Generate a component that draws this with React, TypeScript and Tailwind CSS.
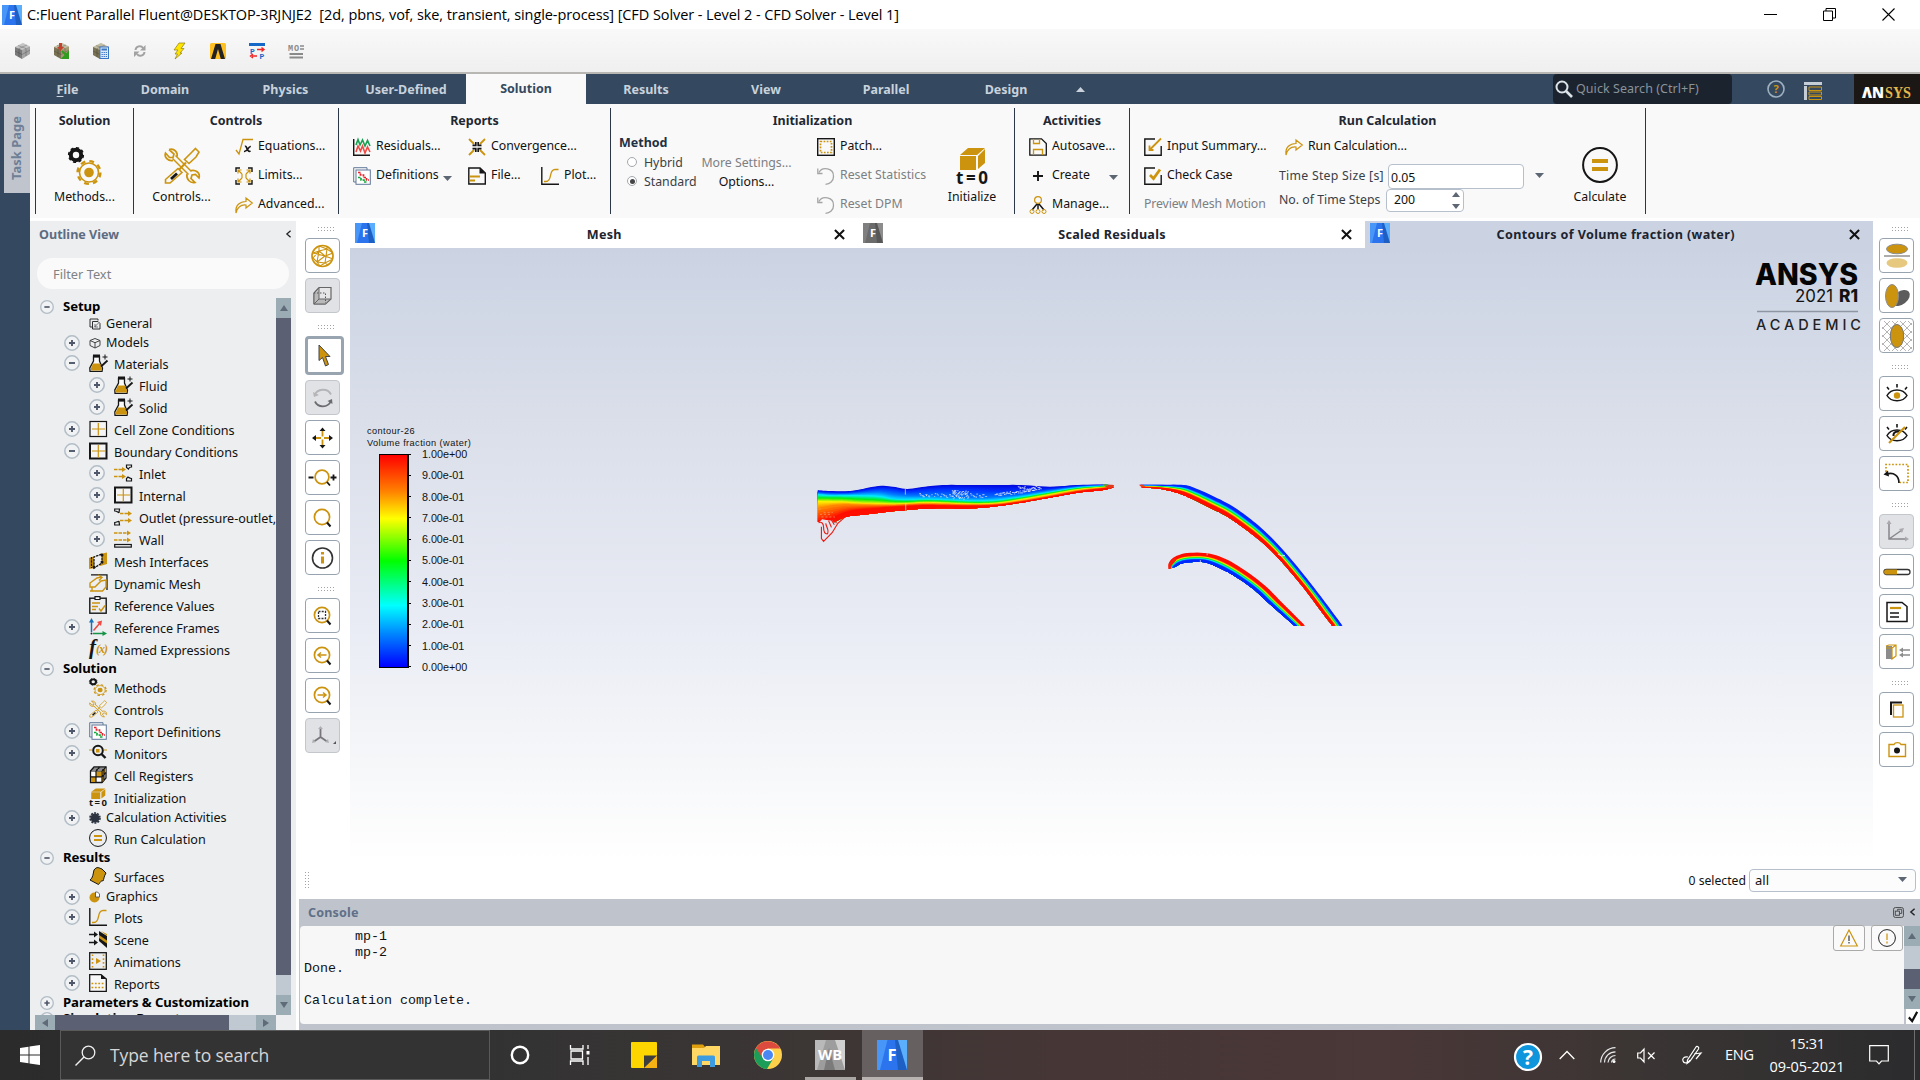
import React from "react";

const GOLD = "#cc930f";
const INK = "#161616";

type IconProps = { className?: string };

function Svg({ box = "0 0 18 18", className = "size-[18px]", children }: { box?: string; className?: string; children: React.ReactNode }) {
  return (
    <svg viewBox={box} className={`shrink-0 overflow-visible ${className}`} fill="none" preserveAspectRatio="none">
      {children}
    </svg>
  );
}

/* ---------- shared icons ---------- */

const FluentLogo = ({ className = "size-5", grey = false }: { className?: string; grey?: boolean }) => (
  <Svg box="0 0 20 20" className={className}>
    <rect width="20" height="20" fill={grey ? "#6b6b6b" : "#2b74ee"} />
    <path d="M0 0H7L2 20H0Z" fill={grey ? "#7f7f7f" : "#4896f8"} />
    <path d="M13 0H20V20H19Z" fill={grey ? "#8d8d8d" : "#5aaefb"} />
    <path d="M12 0H14L20 20H14Z" fill={grey ? "#575757" : "#1e5fc4"} />
    <text x="10" y="14" textAnchor="middle" fontSize="11" fontWeight="700" fill="#fff" fontFamily="Open Sans">F</text>
  </Svg>
);

const Gears = ({ className }: IconProps) => (
  <Svg box="0 0 34 38" className={className}>
    <circle cx="8" cy="8" r="5.2" stroke={INK} strokeWidth="4" />
    <circle cx="8" cy="8" r="7.3" stroke={INK} strokeWidth="1.6" strokeDasharray="3 2.7" />
    <circle cx="21" cy="25.5" r="9.5" stroke={GOLD} strokeWidth="1.6" />
    <circle cx="21" cy="25.5" r="11.4" stroke={GOLD} strokeWidth="2.4" strokeDasharray="4.8 4.15" />
    <circle cx="21" cy="25.5" r="4.8" fill={GOLD} />
  </Svg>
);

const Tools = ({ className }: IconProps) => (
  <Svg box="0 0 36 38" className={className}>
    <path d="M10 10L26 26" stroke={GOLD} strokeWidth="5.600" />
    <path d="M9 9L27 27" stroke="#f6f7f7" strokeWidth="2.600" />
    <path d="M5 2.500L10 7L9 10.500L5.500 10.500L1.500 6C0 10 4 14.500 9 13.500M13 9.500C14 6 11 1 5 2.500M23 27C22 32 26 36.500 31 35.500L27 31.500L28 28L31.500 27.500L35 31C36.500 26 32 22.500 27 23.500" stroke={GOLD} strokeWidth="1.700" />
    <path d="M31.500 1.500L35 5L32 10L25 16.500L20.500 12.500L27 6Z" fill="#f6f7f7" stroke={GOLD} strokeWidth="1.600" />
    <path d="M22 15.500L8 30" stroke={GOLD} strokeWidth="2" />
    <path d="M14 21.500L18 25.500L6 36H1.500V32.500Z" fill="#f6f7f7" stroke={GOLD} strokeWidth="1.600" />
    <path d="M13 26.500L7 32" stroke={INK} strokeWidth="2.800" />
  </Svg>
);

const SqrtX = () => (
  <Svg>
    <path d="M1 12L4 16L8 1.5H18" stroke={GOLD} strokeWidth="1.3" />
    <path d="M10 8.5C12 7 12 15 15.5 13M15.8 8.5C13 8 13 14 9 13.5" stroke={INK} strokeWidth="1.7" />
  </Svg>
);

const Limits = () => (
  <Svg>
    <path d="M1 5V1H5M13 1H17V5M17 13V17H13M5 17H1V13" stroke={INK} strokeWidth="1.4" />
    <path d="M3 3L7 7M15 3L11 7M3 15L7 11M15 15L11 11M7 7V11M11 7V11M3 6.500V3H6.500M11.500 3H15V6.500M15 11.500V15H11.500M6.500 15H3V11.500" stroke={GOLD} strokeWidth="1.2" />
  </Svg>
);

const CurvedArrow = () => (
  <Svg>
    <path d="M1 17C0 9 5 5.500 11 5.500V2L17.300 7L11 12V9C6 8.500 2.500 11 1 17Z" stroke={GOLD} strokeWidth="1.2" />
  </Svg>
);

const Residuals = () => (
  <Svg>
    <path d="M.7 1V17.300H17" stroke={INK} strokeWidth="1.4" />
    <path d="M3 7L5 1.500L7 7L9.500 2L12 8L14.500 2.500L17 8" stroke="#1aa053" strokeWidth="1.600" />
    <path d="M3 14L5 8L7.500 13L9.500 8L12 15L14.500 9L17 14" stroke="#ef4a43" strokeWidth="1.600" />
  </Svg>
);

const ReportDef = () => (
  <Svg>
    <path d="M.7 15V.7H14V3M.7 15H3" stroke="#61789a" strokeWidth="1" />
    <rect x="3" y="3" width="14.300" height="14.300" fill="#fff" stroke="#61789a" />
    <path d="M5 5.500H7.500V8H10.500V10.500H13.500V13H16" stroke="#e8212b" strokeWidth="1.700" strokeDasharray="2.500 1" />
    <path d="M5 10.500H8V13H11V15H14" stroke="#14a83b" strokeWidth="1.700" strokeDasharray="2.500 1" />
  </Svg>
);

const Converge = () => (
  <Svg>
    <path d="M1 1L6 6M17 1L12 6M1 17L6 12M17 17L12 12" stroke={GOLD} strokeWidth="1.800" />
    <path d="M4.500 7.300H7.800V4M13.500 7.300H10.200V4M4.500 10.700H7.800V14M13.500 10.700H10.200V14" stroke={INK} strokeWidth="1.700" />
  </Svg>
);

const FilePage = () => (
  <Svg>
    <path d="M.8 1H12L17.300 6V17H.8Z" stroke={INK} strokeWidth="1.400" />
    <path d="M11.500 1L17.300 6.500H11.500Z" fill={INK} />
    <path d="M2 9.500H12M2 13.500H7" stroke={GOLD} strokeWidth="2" />
  </Svg>
);

const PlotCurve = () => (
  <Svg>
    <path d="M.8 0V17.300H18" stroke={INK} strokeWidth="1.400" />
    <path d="M3 14.500H5C12 14.500 7 2.500 14 2.500H17.500" stroke={GOLD} strokeWidth="1.400" />
  </Svg>
);

const Patch = () => (
  <Svg>
    <rect x=".7" y=".7" width="16.600" height="16.600" stroke={INK} strokeWidth="1.400" />
    <rect x="3.500" y="3.500" width="11" height="11" stroke={GOLD} strokeWidth="1.700" strokeDasharray="1.700 1.400" />
  </Svg>
);

const ResetIcon = () => (
  <Svg>
    <path d="M2 5.500C5 -1 17 1 16.500 9.500C16.500 14 13 17.300 8.500 17.300" stroke="#a5a5a5" strokeWidth="1.300" />
    <path d="M.8 1.500V6.500H5.500" stroke="#a5a5a5" strokeWidth="1.300" />
  </Svg>
);

const CubeT0 = ({ className }: IconProps) => (
  <Svg box="0 0 32 38" className={className}>
    <path d="M4 8L12 1H29L21 8ZM4 9H20V23H4ZM22 9L29 2V16L22 22Z" fill={GOLD} />
    <text x="0" y="37" fontSize="17" fontWeight="700" fontFamily="Noto Sans" fill={INK} textLength="32">t=0</text>
  </Svg>
);

const Floppy = () => (
  <Svg>
    <path d="M.8 .8H12.500L17.300 5.500V17.200H.8Z" stroke={INK} strokeWidth="1.300" />
    <path d="M4.500 1V5.500H10.500V1M4.500 17V11.500H13.500V17" stroke={GOLD} strokeWidth="1.300" />
  </Svg>
);

const PlusMark = () => (
  <Svg>
    <path d="M9 4V14M4 9H14" stroke={INK} strokeWidth="1.900" />
  </Svg>
);

const Manage = () => (
  <Svg>
    <circle cx="9" cy="4" r="3.400" stroke={GOLD} strokeWidth="1.200" />
    <path d="M9 8V13M8 8L3 14M10 8L15 14" stroke={INK} strokeWidth="1.500" />
    <circle cx="3" cy="15.500" r="2" stroke={GOLD} />
    <circle cx="9" cy="15.500" r="2" stroke={GOLD} />
    <circle cx="15" cy="15.500" r="2" stroke={GOLD} />
  </Svg>
);

const CheckSheet = ({ big = false }: { big?: boolean }) => (
  <Svg>
    <path d="M11 1H.8V17.200H17.200V8" stroke={INK} strokeWidth="1.400" />
    {big ? <path d="M5.500 7.500V12H9.500M6 11.500L17 .5" stroke={GOLD} strokeWidth="1.800" /> : <path d="M6 8L9.500 11.500L16 2.500" stroke={GOLD} strokeWidth="2.800" />}
  </Svg>
);

const EqualsCircle = ({ className }: IconProps) => (
  <Svg box="0 0 36 36" className={className}>
    <circle cx="18" cy="18" r="16.900" stroke={INK} strokeWidth="2" />
    <path d="M10 14H26M10 22H26" stroke={GOLD} strokeWidth="4" />
  </Svg>
);

/* ---------- outline tree icons ---------- */

const General = () => (
  <Svg box="0 0 12 12" className="size-3">
    <path d="M9 2.500V1H1V9H3" stroke="#333" />
    <path d="M3.500 3.500H9L11 5.500V11H3.500Z" stroke="#333" />
    <path d="M5 9.500L9.500 5M6 6V9H9" stroke="#555" strokeWidth=".8" />
  </Svg>
);
const Models = () => (
  <Svg box="0 0 12 12" className="size-3">
    <path d="M6 1.500L11 3.500V8.500L6 11L1 8.500V3.500ZM1 3.500L6 5.700L11 3.500M6 5.700V11" stroke="#444" />
  </Svg>
);
const Flask = () => (
  <Svg box="0 0 19 18" className="h-[18px] w-[19px]">
    <path d="M4.500 2.500H10.500V7L13.500 14L13 17.300H1L.8 14L4.500 7Z" fill="#fafafa" stroke={INK} strokeWidth="1.300" />
    <path d="M4 .5H11V3.500H4Z" fill={INK} />
    <path d="M4 9.500H11L13 14V16.500H2V14Z" fill={GOLD} />
    <path d="M12 12.500L18.500 6.500" stroke={INK} strokeWidth="1.800" />
    <path d="M16 .5V5.500M13.500 3H18.500" stroke={INK} />
  </Svg>
);
const Zone = ({ bold = false }: { bold?: boolean }) => (
  <Svg>
    <rect x="1" y="1.500" width="16.500" height="15" stroke={INK} strokeWidth={bold ? 2 : 1.200} fill="#f5f5f5" />
    <path d="M9.300 3V15.500M3 9H16" stroke={GOLD} strokeWidth="1.200" />
  </Svg>
);
const Inlet = () => (
  <Svg>
    <path d="M0 5.500H9M0 12.500H9" stroke={GOLD} strokeWidth="1.300" strokeDasharray="3.500 1" />
    <path d="M8 3L12 5.500L8 8ZM8 10L12 12.500L8 15Z" fill={GOLD} />
    <path d="M12.500 1H17.500V3C15 3 15 4 14.500 5L12.500 3.500ZM12.500 17H17.500V14.500C15 14.500 15 13.500 14 13L12.500 14.500Z" stroke={INK} strokeWidth="1.200" />
  </Svg>
);
const Outlet = () => (
  <Svg>
    <path d="M6 5.500H14M6 12.500H14" stroke={GOLD} strokeWidth="1.300" strokeDasharray="3.500 1" />
    <path d="M14 3L18 5.500L14 8ZM14 10L18 12.500L14 15Z" fill={GOLD} />
    <path d="M.7 1H5.500L5 4.500C4 5 3.500 3 .7 3ZM.7 17H5.500L5 13.500C4 13 3 14.500 .7 14.500Z" stroke={INK} strokeWidth="1.200" />
  </Svg>
);
const Wall = () => (
  <Svg>
    <path d="M0 3H14M0 10H14" stroke={GOLD} strokeWidth="1.300" strokeDasharray="3.500 1" />
    <path d="M13 .5L17 3L13 5.500ZM13 7.500L17 10L13 12.500Z" fill={GOLD} />
    <rect x=".7" y="14.500" width="16.600" height="2.600" stroke={INK} strokeWidth="1.200" />
  </Svg>
);
const MeshInterfaces = () => (
  <Svg>
    <path d="M0 6L6 4V16L0 17ZM11 2L18 .5V12L11 14Z" fill={GOLD} />
    <path d="M5 16V5L13 2V11Z" fill="#eceef0" />
    <path d="M2.500 5V16M5 16V5L13 2V11Z" stroke={INK} strokeWidth="1.300" strokeDasharray="2.500 .8" />
    <circle cx="5" cy="15" r="1.500" fill={INK} /><circle cx="13" cy="3" r="1.500" fill={INK} /><circle cx="13" cy="10" r="1.500" fill={INK} />
  </Svg>
);
const DynamicMesh = () => (
  <Svg>
    <path d="M2 .8H18V16" stroke={INK} strokeWidth="1.300" />
    <path d="M1 17H13.500L17 13V6L12 7L6 13H1V9L8 4L12 3M9 1L13 3.500L10 6.500M3 17V13" stroke={GOLD} strokeWidth="1.400" />
  </Svg>
);
const RefValues = () => (
  <Svg>
    <rect x=".8" y="2.200" width="16.400" height="15" stroke={INK} strokeWidth="1.400" />
    <path d="M6 .7H11V3.500H6Z" fill="#fff" stroke={INK} strokeWidth="1.200" />
    <path d="M3 7H11M3 10.500H9M3 13.500H7M10 12.500L12 15L16 9.500" stroke={GOLD} strokeWidth="1.400" />
  </Svg>
);
const RefFrames = () => (
  <Svg>
    <path d="M2.500 14V3" stroke="#1573bd" strokeWidth="1.500" /><path d="M0 4.500L2.500 0L5 4.500Z" fill="#1573bd" />
    <path d="M4.500 12.500L11 5" stroke="#ef4a43" strokeWidth="1.500" /><path d="M8 4L13 2.500L12 8Z" fill="#ef4a43" />
    <path d="M4 15.500H14" stroke="#159346" strokeWidth="1.500" /><path d="M13.500 13L18 15.500L13.500 18Z" fill="#159346" />
    <circle cx="2.500" cy="15.500" r="1" fill="#222" />
  </Svg>
);
const Fx = () => (
  <Svg box="0 0 19 18" className="h-[18px] w-[19px]">
    <text x="0" y="14" fontFamily="Liberation Serif" fontStyle="italic" fontWeight="700" fontSize="21" fill={INK}>f</text>
    <text x="7" y="13" fontFamily="Liberation Serif" fontStyle="italic" fontWeight="700" fontSize="12" fill={GOLD} textLength="12">(x)</text>
  </Svg>
);
const Monitor = () => (
  <Svg>
    <path d="M0 6H3M15 6H18" stroke={GOLD} strokeWidth="1.200" />
    <circle cx="9" cy="6.500" r="4.800" stroke={INK} strokeWidth="2" />
    <path d="M12.500 10L16.500 14" stroke={INK} strokeWidth="2.400" />
    <rect x="7" y="5" width="3.500" height="3.500" fill={GOLD} />
  </Svg>
);
const CellRegisters = () => (
  <Svg>
    <path d="M1.500 5L5 1H17V12L13 16.500H1.500Z" fill="#fff" stroke={INK} strokeWidth="1.300" />
    <path d="M7 5.500H12.500V11H7ZM2 11H7V16H2ZM13 5L17 1V7L13 11ZM13 16V11L15 9V14Z" fill={GOLD} />
    <path d="M1.500 5H13V16.500M13 5L17 1M7 16V5L10.500 1M1.500 10.800H13L17 6.500M15 3V14M3.200 3H15" stroke={INK} strokeWidth="1.200" />
  </Svg>
);
const CalcAct = () => (
  <Svg box="0 0 12 12" className="size-3">
    <circle cx="6" cy="6" r="4.500" fill="#2b3440" /><circle cx="6" cy="6" r="5" stroke="#2b3440" strokeDasharray="2 1.140" strokeWidth="1.600" />
  </Svg>
);
const Surface = () => (
  <Svg>
    <path d="M5 3C8 -1 10 1 13 2L17 6C15 9 15 12 14 14C12 13 11 16 9.500 17.500L1 13C4 11 4 7 5 3Z" fill={GOLD} stroke={INK} />
  </Svg>
);
const Graphics = () => (
  <Svg box="0 0 12 12" className="size-3">
    <circle cx="5.500" cy="6.500" r="5" fill={GOLD} /><path d="M6.500 6V1H8.500L10.500 3V6Z" fill="#fff" stroke="#444" strokeWidth=".8" />
  </Svg>
);
const Scene = () => (
  <Svg>
    <path d="M0 4.500H6M0 12.500H6" stroke={INK} strokeWidth="1.700" /><path d="M5 1.500L9 4.500L5 7.500ZM5 9.500L9 12.500L5 15.500Z" fill={INK} />
    <path d="M10 1L18 6V18L10 11Z" fill={INK} /><path d="M10 5L18 10.500V13.500L10 8Z" fill={GOLD} /><path d="M12 1L18 4V6Z" fill={GOLD} />
  </Svg>
);
const Animation = () => (
  <Svg>
    <rect x=".7" y=".7" width="16.600" height="16.600" stroke={INK} strokeWidth="1.300" />
    <path d="M3.500 2.500V16M14.500 2.500V16" stroke={GOLD} strokeWidth="1.600" strokeDasharray="1.600 2.200" /><path d="M7 6L12 9L7 12Z" fill={GOLD} />
  </Svg>
);
const Reports = () => (
  <Svg>
    <path d="M.7 .7H12L17.300 5V17.300H.7Z" stroke={INK} strokeWidth="1.300" fill="#f7f7f7" /><path d="M12 .5V5H17.500Z" fill={INK} />
    <path d="M2.500 9.500H16M2.500 13.500H16" stroke={GOLD} strokeWidth="1.600" strokeDasharray="1.800 1.600" />
  </Svg>
);

/* ---------- title bar and quick toolbar ---------- */

function TitleBar() {
  return (
    <header className="flex h-[29px] items-center bg-white">
      <FluentLogo className="ml-[2px] size-5" />
      <span className="ml-[5px] font-['Open_Sans'] text-[14.500px] tracking-[-0.080px] whitespace-pre text-black">
        {"C:Fluent Parallel Fluent@DESKTOP-3RJNJE2  [2d, pbns, vof, ske, transient, single-process] [CFD Solver - Level 2 - CFD Solver - Level 1]"}
      </span>
      <div className="ml-auto flex items-center gap-[46px] pr-[25px]">
        <Svg box="0 0 13 13" className="size-[13px]"><path d="M0 6.500H13" stroke="#000" /></Svg>
        <Svg box="0 0 13 13" className="size-[13px]"><path d="M.5 3H9.500V12.500H.5ZM3 3V.5H12.500V10H9.500" stroke="#000" /></Svg>
        <Svg box="0 0 13 13" className="size-[13px]"><path d="M.5 .5L12.500 12.500M12.500 .5L.5 12.500" stroke="#000" strokeWidth="1.100" /></Svg>
      </div>
    </header>
  );
}

const RockCube = ({ tone = "#a39a72" }: { tone?: string }) => (
  <>
    <path d="M0 4L8 0L15 3.500V11L7 16L0 12Z" fill={tone} />
    <path d="M0 4L7 7V16L0 12Z" fill="#000" opacity=".25" />
    <path d="M0 4L8 0L15 3.500L7 7Z" fill="#fff" opacity=".35" />
    <path d="M3 2.500L11 5.500V13M12 2L4 5.500V14M0 8L7 11.500L15 7" stroke="#222" strokeWidth=".5" opacity=".5" />
  </>
);

function QuickBar() {
  return (
    <div className="flex h-[45px] items-center gap-[23px] border-b-2 border-[#b9b7b3] bg-linear-to-b from-[#f9f9f9] to-[#efefef] pl-[15px]">
      <Svg box="0 0 16 16" className="size-4"><RockCube tone="#a5a5a5" /></Svg>
      <Svg box="0 0 16 16" className="size-4"><RockCube /><path d="M5 0H8V4H10L6.500 8L3 4H5Z" fill="#c8412a" /><path d="M8 8L12 12M14 10V15H9Z" stroke="#2f9c1f" strokeWidth="2" fill="#2f9c1f" /></Svg>
      <Svg box="0 0 16 16" className="size-4"><RockCube /><rect x="7" y="4" width="8.500" height="11.500" fill="#dce9f8" stroke="#3b76c4" /><path d="M8.500 6.500H14" stroke="#3b76c4" strokeWidth="2" /><path d="M8.500 9.500H14M8.500 11.500H14M8.500 13.500H14" stroke="#3b76c4" strokeDasharray="1.300 .8" /></Svg>
      <Svg box="0 0 16 16" className="size-4"><path d="M3.500 7C4 3 9 2 11 5M12.500 9C12 13 7 14 5 11" stroke="#a2a2a2" strokeWidth="2" /><path d="M13.500 2V7.500H8ZM2 14V8.500H7.500Z" fill="#a2a2a2" /></Svg>
      <Svg box="0 0 16 16" className="size-4"><path d="M8 0H14L10 5.500H13L9 10H11L4 16L6.500 11H4L7 7H3Z" fill="#ffe500" stroke="#8f7c12" strokeWidth=".7" /></Svg>
      <Svg box="0 0 16 16" className="size-4"><rect width="16" height="16" rx="1.500" fill="#fdbf22" /><path d="M1 16L5.500 1H10.500L15 16H10.800L8 6L5.200 16Z" fill="#222" /></Svg>
      <Svg box="0 0 16 16" className="size-4"><path d="M0 1.500H16" stroke="#1668c8" strokeWidth="3" /><text x="1" y="10.500" fontSize="8" fontWeight="700" fontFamily="Liberation Mono" fill="#1668c8">P</text><text x="10.500" y="16" fontSize="8" fontWeight="700" fontFamily="Liberation Mono" fill="#1668c8">P</text><path d="M8 6.500H14M12.500 4.500L15 6.500L12.500 8.500M8 13H3M4 11L1.500 13L4 15" stroke="#f02626" strokeWidth="1.400" /></Svg>
      <Svg box="0 0 16 16" className="size-4"><text x="0" y="7.500" fontSize="8.500" fontWeight="700" fontFamily="Liberation Mono" fill="#8a8a8a" textLength="11">MO</text><path d="M12 3H16M12 6H16" stroke="#8a8a8a" strokeWidth="1.300" /><path d="M1.500 11H15M1.500 14.500H15" stroke="#8a8a8a" strokeWidth="2" /></Svg>
    </div>
  );
}

function MenuBar() {
  const tabs = ["Results", "View", "Parallel", "Design"];
  return (
    <nav className="flex h-[30px] items-center bg-[#34495f] text-[12.500px] font-bold text-[#c9d2dc]">
      <span className="ml-[30px] w-[75px] pt-[3px] text-center"><u className="underline-offset-2">F</u>ile</span>
      <span className="w-[120px] pt-[3px] text-center">Domain</span>
      <span className="w-[121px] pt-[3px] text-center">Physics</span>
      <span className="w-[120px] pt-[3px] text-center">User-Defined</span>
      <span className="h-full w-[120px] bg-[#f9f9f9] pt-[6px] text-center text-[#34495f]">Solution</span>
      {tabs.map((t) => <span key={t} className="w-[120px] pt-[3px] text-center">{t}</span>)}
      <Svg box="0 0 10 6" className="ml-[10px] h-[5px] w-[9px]"><path d="M5 0L10 6H0Z" fill="#c9d2dc" /></Svg>
      <div className="ml-auto flex h-full w-[179px] items-center gap-[3px] rounded bg-[#1b242e] pl-[2px] font-normal text-[#8a929a]">
        <Svg><circle cx="7" cy="7" r="5.500" stroke="#dbe2e8" strokeWidth="2" /><path d="M11 11L17 17" stroke="#dbe2e8" strokeWidth="2.600" /></Svg>
        <span className="pt-px text-[12.500px] tracking-[.060px]">Quick Search (Ctrl+F)</span>
      </div>
      <Svg className="ml-[35px] size-[18px]"><circle cx="9" cy="9" r="8" stroke="#9fb0c2" strokeWidth="1.600" /><text x="9" y="13" textAnchor="middle" fontSize="11" fontWeight="700" fontFamily="Noto Sans" fill={GOLD}>?</text></Svg>
      <Svg className="mt-[3px] ml-[19px] size-[18px]"><path d="M0 1.500H18" stroke="#c4cdd6" strokeWidth="3" /><path d="M1.500 4V18" stroke="#c4cdd6" strokeWidth="3" /><path d="M5 5H17.500V8.500H5ZM5 10H17.500V13H5ZM5 14.500H17.500V17.500H5Z" stroke={GOLD} /></Svg>
      <div className="ml-[32px] flex h-full w-[66px] items-center justify-center bg-[#1b1714] pt-[6px]">
        <Svg box="0 0 50 13" className="h-[13px] w-[50px]">
          <text x="0" y="12" fontFamily="Open Sans" fontWeight="800" fontSize="15" fill="#fff" textLength="22" lengthAdjust="spacingAndGlyphs">ΛN</text>
          <text x="23" y="12" fontFamily="Liberation Serif" fontSize="16" fontWeight="700" fill="#e5b94b" textLength="26" lengthAdjust="spacingAndGlyphs">SYS</text>
        </Svg>
      </div>
    </nav>
  );
}

/* ---------- ribbon ---------- */

function Group({ title, className, children }: { title: string; className: string; children: React.ReactNode }) {
  return (
    <section className={`flex h-[106px] shrink-0 flex-col border-r border-[#2c3848] ${className}`}>
      <h2 className="h-6 shrink-0 text-center text-[12.500px] leading-[25px] font-bold text-[#1f2833]">{title}</h2>
      <div className="flex h-[87px] shrink-0">{children}</div>
    </section>
  );
}

function Cmd({ icon, label, dim = false, className = "" }: { icon?: React.ReactNode; label: string; dim?: boolean; className?: string }) {
  return (
    <div className={`flex h-[29px] items-center gap-[5px] whitespace-nowrap ${dim ? "text-[#7c7f83]" : "text-[#111]"} ${className}`}>
      {icon}
      <span>{label}</span>
    </div>
  );
}

function BigCmd({ icon, label, className }: { icon: React.ReactNode; label: string; className: string }) {
  return (
    <div className={`flex shrink-0 flex-col items-center pt-[15px] ${className}`}>
      <div className="flex h-[39px] items-start">{icon}</div>
      <span className="mt-[2px] leading-[18px] whitespace-nowrap text-[#111]">{label}</span>
    </div>
  );
}

const Down = ({ className = "" }: IconProps) => (
  <Svg box="0 0 10 6" className={`h-[5px] w-[9px] ${className}`}><path d="M0 0H10L5 6Z" fill="#5d6673" /></Svg>
);

function Radio({ label, on = false }: { label: string; on?: boolean }) {
  return (
    <div className="flex h-[19px] items-center gap-[7px] pl-[8px] text-[#3a3f45]">
      <span className="-mt-[3px] flex size-[10px] items-center justify-center rounded-full border border-[#a4a8ad] bg-white">
        {on && <span className="size-[5px] rounded-full bg-[#444]" />}
      </span>
      <span>{label}</span>
    </div>
  );
}

function Ribbon() {
  return (
    <div className="flex h-[114px] bg-[#f9f9f9] pt-1 text-[12.300px]">
      <div className="-mt-1 flex w-[30px] shrink-0 justify-end bg-[#34495f]">
        <div className="flex h-[89px] w-[26px] items-center justify-center bg-[#bfc4cd]">
          <span className="-mt-px rotate-180 text-[12.800px] font-bold tracking-[.1px] text-[#6e7f96] [writing-mode:vertical-rl]">Task Page</span>
        </div>
      </div>
      <div className="h-[106px] w-[6px] border-r border-[#2c3848]" />

      <Group title="Solution" className="w-[98px]">
        <BigCmd className="w-full" icon={<Gears className="ml-[1px] h-[38px] w-[34px]" />} label="Methods..." />
      </Group>

      <Group title="Controls" className="w-[205px]">
        <BigCmd className="w-[95px]" icon={<Tools className="h-[38px] w-[36px]" />} label="Controls..." />
        <div className="ml-[6px]">
          <Cmd icon={<SqrtX />} label="Equations..." />
          <Cmd icon={<Limits />} label="Limits..." />
          <Cmd icon={<CurvedArrow />} label="Advanced..." />
        </div>
      </Group>

      <Group title="Reports" className="w-[272px]">
        <div className="ml-[14px] w-[115px]">
          <Cmd icon={<Residuals />} label="Residuals..." />
          <div className="flex items-center">
            <Cmd icon={<ReportDef />} label="Definitions" className="w-[90px]" />
            <Down className="mt-[5px]" />
          </div>
        </div>
        <div>
          <Cmd icon={<Converge />} label="Convergence..." />
          <div className="flex">
            <Cmd icon={<FilePage />} label="File..." className="w-[73px]" />
            <Cmd icon={<PlotCurve />} label="Plot..." />
          </div>
        </div>
      </Group>

      <Group title="Initialization" className="w-[404px]">
        <div className="w-[90px] pl-[8px] pt-[2px]">
          <div className="h-[20px] text-[12.500px] leading-[18px] font-bold text-[#1f3144]">Method</div>
          <Radio label="Hybrid" />
          <Radio label="Standard" on />
        </div>
        <div className="flex w-[91px] flex-col items-center pt-[21px] leading-[19px] whitespace-nowrap">
          <span className="text-[#7c7f83]">More Settings...</span>
          <span className="text-[#111]">Options...</span>
        </div>
        <div className="ml-[25px] w-[115px]">
          <Cmd icon={<Patch />} label="Patch..." />
          <Cmd icon={<ResetIcon />} label="Reset Statistics" dim />
          <Cmd icon={<ResetIcon />} label="Reset DPM" dim />
        </div>
        <BigCmd className="ml-[10px] w-[60px]" icon={<CubeT0 className="h-[38px] w-[32px]" />} label="Initialize" />
      </Group>

      <Group title="Activities" className="w-[115px]">
        <div className="ml-[14px] w-[80px]">
          <Cmd icon={<Floppy />} label="Autosave..." />
          <Cmd icon={<PlusMark />} label="Create" />
          <Cmd icon={<Manage />} label="Manage..." />
        </div>
        <Down className="mt-[43px]" />
      </Group>

      <Group title="Run Calculation" className="w-[516px]">
        <div className="ml-[14px] w-[135px]">
          <Cmd icon={<CheckSheet big />} label="Input Summary..." />
          <Cmd icon={<CheckSheet />} label="Check Case" />
          <Cmd label="Preview Mesh Motion" dim className="tracking-[-0.120px]" />
        </div>
        <div className="w-[267px] text-[#3a3f45]">
          <Cmd icon={<CurvedArrow />} label="Run Calculation..." className="pl-[6px] tracking-[-0.050px]" />
          <div className="mt-[3px] flex h-[25px] items-center">
            <span className="w-[109px] tracking-[.250px] whitespace-nowrap">Time Step Size [s]</span>
            <span className="flex h-[25px] w-[136px] items-center rounded-[4px] border border-[#b5c0cc] bg-white pt-[3px] pl-[2px] text-[#111]">0.05</span>
            <Down className="mt-[-2px] ml-[11px]" />
          </div>
          <div className="flex h-[23px] items-center">
            <span className="w-[107px] whitespace-nowrap">No. of Time Steps</span>
            <span className="flex h-[23px] w-[78px] items-center justify-between rounded-[4px] border border-[#b5c0cc] bg-white pr-[3px] pl-[7px] text-[#111]">
              200
              <span className="flex flex-col gap-[7px]">
                <Svg box="0 0 10 6" className="h-[5px] w-[8px]"><path d="M5 0L10 6H0Z" fill="#5d6673" /></Svg>
                <Svg box="0 0 10 6" className="h-[5px] w-[8px]"><path d="M0 0H10L5 6Z" fill="#5d6673" /></Svg>
              </span>
            </span>
          </div>
        </div>
        <BigCmd className="ml-[24px] w-[60px]" icon={<EqualsCircle className="size-9" />} label="Calculate" />
      </Group>
    </div>
  );
}

/* ---------- outline tree ---------- */

type Node = { label: string; depth: number; icon?: React.ReactNode; exp?: "+" | "-"; small?: boolean };

const NODES: Node[] = [
  { label: "Setup", depth: 0, exp: "-" },
  { label: "General", depth: 1, icon: <General />, small: true },
  { label: "Models", depth: 1, icon: <Models />, exp: "+", small: true },
  { label: "Materials", depth: 1, icon: <Flask />, exp: "-" },
  { label: "Fluid", depth: 2, icon: <Flask />, exp: "+" },
  { label: "Solid", depth: 2, icon: <Flask />, exp: "+" },
  { label: "Cell Zone Conditions", depth: 1, icon: <Zone />, exp: "+" },
  { label: "Boundary Conditions", depth: 1, icon: <Zone bold />, exp: "-" },
  { label: "Inlet", depth: 2, icon: <Inlet />, exp: "+" },
  { label: "Internal", depth: 2, icon: <Zone bold />, exp: "+" },
  { label: "Outlet (pressure-outlet,", depth: 2, icon: <Outlet />, exp: "+" },
  { label: "Wall", depth: 2, icon: <Wall />, exp: "+" },
  { label: "Mesh Interfaces", depth: 1, icon: <MeshInterfaces /> },
  { label: "Dynamic Mesh", depth: 1, icon: <DynamicMesh /> },
  { label: "Reference Values", depth: 1, icon: <RefValues /> },
  { label: "Reference Frames", depth: 1, icon: <RefFrames />, exp: "+" },
  { label: "Named Expressions", depth: 1, icon: <Fx /> },
  { label: "Solution", depth: 0, exp: "-" },
  { label: "Methods", depth: 1, icon: <Gears className="size-[18px]" /> },
  { label: "Controls", depth: 1, icon: <Tools className="size-[18px]" /> },
  { label: "Report Definitions", depth: 1, icon: <ReportDef />, exp: "+" },
  { label: "Monitors", depth: 1, icon: <Monitor />, exp: "+" },
  { label: "Cell Registers", depth: 1, icon: <CellRegisters /> },
  { label: "Initialization", depth: 1, icon: <CubeT0 className="size-[18px]" /> },
  { label: "Calculation Activities", depth: 1, icon: <CalcAct />, exp: "+", small: true },
  { label: "Run Calculation", depth: 1, icon: <EqualsCircle className="size-[18px]" /> },
  { label: "Results", depth: 0, exp: "-" },
  { label: "Surfaces", depth: 1, icon: <Surface /> },
  { label: "Graphics", depth: 1, icon: <Graphics />, exp: "+", small: true },
  { label: "Plots", depth: 1, icon: <PlotCurve />, exp: "+" },
  { label: "Scene", depth: 1, icon: <Scene /> },
  { label: "Animations", depth: 1, icon: <Animation />, exp: "+" },
  { label: "Reports", depth: 1, icon: <Reports />, exp: "+" },
  { label: "Parameters & Customization", depth: 0, exp: "+" },
  { label: "Simulation Reports", depth: 0, exp: "+" },
];

function Expander({ kind, root }: { kind?: "+" | "-"; root: boolean }) {
  const size = root ? "size-[14px]" : "size-4";
  if (!kind) return <span className={`shrink-0 ${size}`} />;
  return (
    <Svg box="0 0 16 16" className={size}>
      <circle cx="8" cy="8" r="7.200" stroke="#b2bdc6" strokeWidth="1.500" fill="#f1f2f4" />
      <path d={kind === "+" ? "M5 8H11M8 5V11" : "M5 8H11"} stroke="#4f586a" strokeWidth="1.900" />
    </Svg>
  );
}

function TreeRow({ n }: { n: Node }) {
  if (n.depth === 0)
    return (
      <li className="flex h-4 shrink-0 items-center gap-[9px] pl-[10px] text-[13.200px] font-bold text-black">
        <Expander kind={n.exp} root />
        <span className="tracking-[-0.100px]">{n.label}</span>
      </li>
    );
  return (
    <li className={`flex shrink-0 items-center text-[#111] ${n.small ? "h-[19px]" : "h-[22px]"} ${n.depth === 1 ? "pl-[34px]" : "pl-[59px]"}`}>
      <span className="-mt-[2px] flex"><Expander kind={n.exp} root={false} /></span>
      <span className={`-mt-[2px] ml-[9px] flex shrink-0 ${n.small ? "w-[17px]" : "w-[25px]"}`}>{n.icon}</span>
      <span className={`${n.small ? "" : "pt-[2px]"} tracking-[-0.040px]`}>{n.label}</span>
    </li>
  );
}

const Arrow = ({ dir, className }: { dir: "up" | "down" | "left" | "right"; className: string }) => {
  const d = { up: "M5 2L9 8H1Z", down: "M1 2H9L5 8Z", left: "M8 1V9L2 5Z", right: "M2 1V9L8 5Z" }[dir];
  return (
    <div className={`flex shrink-0 items-center justify-center bg-[#9bacb5] ${className}`}>
      <Svg box="0 0 10 10" className="size-[10px]"><path d={d} fill="#5f6b78" /></Svg>
    </div>
  );
};

function Outline() {
  return (
    <aside className="flex w-[266px] shrink-0 flex-col bg-[#eceef0]">
      <div className="flex h-[28px] shrink-0 items-center justify-between pr-[5px] pl-[9px]">
        <h2 className="text-[12.600px] font-bold text-[#5c6c82]">Outline View</h2>
        <Svg box="0 0 6 10" className="mt-[-3px] h-[8px] w-[5px]"><path d="M5.500 1L1 5L5.500 9" stroke="#222" strokeWidth="1.500" /></Svg>
      </div>
      <div className="mt-[9px] ml-[7px] flex h-[31px] w-[252px] shrink-0 items-center rounded-full bg-[#fafafa] pt-[2px] pl-[16px] text-[12.800px] text-[#7e8286]">Filter Text</div>
      <div className="mt-[9px] flex h-[717px] shrink-0">
        <ul className="flex w-[246px] flex-col overflow-hidden pt-[1px] text-[12.600px] whitespace-nowrap">
          {NODES.map((n) => <TreeRow key={n.label + n.depth} n={n} />)}
        </ul>
        <div className="flex w-[15px] flex-col bg-[#c0c9d1]">
          <Arrow dir="up" className="h-5 w-full" />
          <div className="h-[657px] bg-[#5b6172]" />
          <Arrow dir="down" className="mt-auto h-5 w-full" />
        </div>
      </div>
      <div className="ml-[5px] flex h-[15px] w-[241px] shrink-0 bg-[#c0c9d1]">
        <Arrow dir="left" className="h-full w-5" />
        <div className="w-[174px] bg-[#5b6172]" />
        <Arrow dir="right" className="ml-auto h-full w-5" />
      </div>
    </aside>
  );
}

/* ---------- graphics toolbars ---------- */

function Grip() {
  return (
    <div className="flex h-[18px] shrink-0 items-center">
      <div className="ml-[13px] grid grid-cols-6 gap-[2px]">
        {Array.from({ length: 12 }, (_, i) => <span key={i} className="size-px bg-[#a3a3a3]" />)}
      </div>
    </div>
  );
}

function ToolBtn({ children, off = false, sel = false }: { children: React.ReactNode; off?: boolean; sel?: boolean }) {
  const look = sel ? "size-[39px] border-[3px] border-[#98a5b1] bg-white" : off ? "size-[35px] border border-[#c3c6cb] bg-[#e1e2e6]" : "size-[35px] border border-[#97a3af] bg-white";
  return (
    <div className={`mb-[5px] flex shrink-0 items-center justify-center rounded-[4px] ${look}`}>
      <Svg box="0 0 30 30" className="size-[30px]">{children}</Svg>
    </div>
  );
}

const Lens = ({ children }: { children?: React.ReactNode }) => (
  <>
    <circle cx="14" cy="14" r="7.600" stroke={GOLD} strokeWidth="1.700" />
    <path d="M19 19.500L22.500 23.500" stroke={INK} strokeWidth="2" />
    {children}
  </>
);

function LeftTools() {
  return (
    <div className="-mt-px flex w-[54px] shrink-0 flex-col pl-[9px]">
      <Grip />
      <ToolBtn>
        <circle cx="14.500" cy="15" r="10.500" stroke={GOLD} strokeWidth="1.700" />
        <path d="M5 12L11 10L19 8L25 12M5 17L9 21L17 22L25 18M11 5L11 10L9 21M19 5L19 8L17 22M11 10L17 15L25 12M17 15L9 21M5 12L17 15L25 18M11 5L19 8M9 21L12 25L17 22L20 24M5 17L11 10" stroke={GOLD} strokeWidth="1.100" />
      </ToolBtn>
      <ToolBtn off>
        <path d="M6 12L11 6.500H23V18L17.500 23H6Z" fill="#e6e6e8" stroke="#666" strokeWidth="1.200" />
        <path d="M6 12L11 7V18L6 23ZM6 23L11 18H22.500L17.500 23Z" fill="#b9b9bb" stroke="#666" strokeWidth="1" />
        <path d="M6 12H17.500V22" stroke="#555" strokeDasharray="1.500 1.500" />
      </ToolBtn>
      <Grip />
      <ToolBtn sel><path d="M9 4L20 15.500H15.500L18.500 23.500L15.500 25L12.500 16.500L9 19.500Z" fill={GOLD} stroke="#444" strokeWidth="1" /></ToolBtn>
      <ToolBtn off>
        <path d="M6.500 12.500C9 5 20 5 23 11.500" stroke="#b5b5b8" strokeWidth="1.800" /><path d="M5 9L6 14L11 12Z" fill="#b5b5b8" />
        <path d="M23 18C20 25 10 25 7 18.500" stroke="#6c6c70" strokeWidth="1.800" /><path d="M24.500 21L24 16L19.500 18Z" fill="#6c6c70" />
      </ToolBtn>
      <ToolBtn>
        <path d="M14.500 8V22M7.500 15H21.500" stroke={GOLD} strokeWidth="1.800" /><path d="M14.500 4.500L17.500 8H11.500ZM14.500 25.500L17.500 22H11.500ZM4 15L8 12V18ZM25 15L21 12V18Z" fill={INK} />
        <rect x="13" y="13.500" width="3" height="3" fill="#fff" />
      </ToolBtn>
      <ToolBtn><circle cx="14" cy="14" r="6.900" stroke={GOLD} strokeWidth="1.700" /><path d="M19 19L22 22.500M.5 14.500H5.500M22.500 14.500H28.500M25.500 11.500V17.500" stroke={INK} strokeWidth="1.800" /></ToolBtn>
      <ToolBtn><Lens /></ToolBtn>
      <ToolBtn><circle cx="14.500" cy="15" r="10" stroke="#333" strokeWidth="1.600" /><path d="M14.500 13.500V20.500M14.500 9V11.500" stroke={GOLD} strokeWidth="3" /></ToolBtn>
      <Grip />
      <ToolBtn><Lens><rect x="10.500" y="10.500" width="7" height="7" stroke="#333" strokeWidth="1.300" strokeDasharray="2 1.200" /></Lens></ToolBtn>
      <ToolBtn><Lens><path d="M18.500 14H11M13 11.500L10 14L13 16.500" stroke={GOLD} strokeWidth="1.500" /></Lens></ToolBtn>
      <ToolBtn><Lens><path d="M9.500 14H17M15 11.500L18 14L15 16.500" stroke={GOLD} strokeWidth="1.500" /></Lens></ToolBtn>
      <ToolBtn off>
        <path d="M12.500 8V16L6 20.500M12.500 16L19 20.500" stroke="#77777b" strokeWidth="1.800" /><path d="M12.500 5L15 8H10ZM4 22L5 18L8 21ZM21 22L20 18L17 21Z" fill="#b0b0b4" />
        <path d="M28 20V23H25Z" fill="#555" />
      </ToolBtn>
    </div>
  );
}

function RightTools() {
  const hatch = Array.from({ length: 7 }, (_, i) => i * 8 - 22);
  return (
    <div className="-mt-px flex w-[47px] shrink-0 flex-col pl-[6px]">
      <Grip />
      <ToolBtn>
        <ellipse cx="15" cy="8" rx="10.500" ry="4.800" fill={GOLD} stroke="#8d8d8d" /><path d="M2 15H28" stroke="#777" strokeWidth="1.200" />
        <ellipse cx="15" cy="22" rx="10.500" ry="4.800" fill="#e6c97f" />
      </ToolBtn>
      <ToolBtn><ellipse cx="19" cy="17" rx="10" ry="6.500" transform="rotate(-38 19 17)" fill="#5c5c5c" /><ellipse cx="10" cy="15" rx="6.500" ry="11.500" fill={GOLD} stroke="#8d8d8d" /></ToolBtn>
      <ToolBtn>
        <svg width="30" height="30" viewBox="0 0 30 30" stroke="#b5b5b5">{hatch.map((k) => <path key={k} d={`M${k} 0L${k + 30} 30M${k + 30} 0L${k} 30`} />)}</svg>
        <ellipse cx="15" cy="15" rx="6.700" ry="11.500" fill={GOLD} stroke="#777" />
      </ToolBtn>
      <Grip />
      <ToolBtn>
        <path d="M5 16.500C9 9 21 9 25 16.500C21 23.500 9 23.500 5 16.500Z" stroke={INK} strokeWidth="1.500" /><circle cx="15" cy="16.500" r="3.200" fill={GOLD} />
        <path d="M15 5V8.500M5 8L7 10.500M25 8L23 10.500" stroke={INK} strokeWidth="1.600" />
      </ToolBtn>
      <ToolBtn>
        <path d="M5 16.500C9 9 21 9 25 16.500C21 23.500 9 23.500 5 16.500Z" stroke={INK} strokeWidth="1.500" /><path d="M11.500 17C11 13 15 12 17 13" stroke={INK} strokeWidth="2" />
        <path d="M15 5V8.500M5 8L7 10.500M25 8L23 10.500" stroke={INK} strokeWidth="1.600" /><path d="M7 24L23 8" stroke={GOLD} strokeWidth="2.200" />
      </ToolBtn>
      <ToolBtn><path d="M4 13V5.500H26V23.500H18" stroke={GOLD} strokeWidth="1.700" strokeDasharray="1.700 1.700" /><path d="M5 15C12 13 17 17 17 24" stroke={INK} strokeWidth="1.700" /><path d="M1.500 15.500L6 11.500L7 17.500Z" fill={INK} /></ToolBtn>
      <Grip />
      <ToolBtn off><path d="M7 6V22H24M7 22L20 13" stroke="#87878b" strokeWidth="1.500" /><path d="M7 3L9.500 7H4.500ZM27 22L23 19.500V24.500ZM22 11L17 12L20 16Z" fill="#aaaaae" /></ToolBtn>
      <ToolBtn><rect x="2" y="12.500" width="26" height="5" rx="2.500" stroke="#333" strokeWidth="1.300" /><path d="M4 12.500H15V17.500H4C1.500 17.500 1.500 12.500 4 12.500Z" fill={GOLD} /></ToolBtn>
      <ToolBtn><path d="M5 5.500H20L25 9.500V24.500H5Z" stroke={INK} strokeWidth="1.500" /><path d="M8 11H19" stroke={GOLD} strokeWidth="2.200" /><path d="M8 16H17M8 20H17" stroke={INK} strokeWidth="1.400" /></ToolBtn>
      <ToolBtn><path d="M4 9H10V22H4Z" fill="#8c8c8c" /><path d="M4 9L7 8H14V19L10 22V11L14 8M10 22V11H4" stroke={GOLD} strokeWidth="1.200" /><path d="M19 13H28M19 18H28" stroke="#8c8c8c" strokeWidth="1.400" /><path d="M17 13L21 10.500V15.500ZM17 18L21 15.500V20.500Z" fill="#8c8c8c" /></ToolBtn>
      <Grip />
      <ToolBtn><path d="M20 7.500H9V20" stroke={INK} strokeWidth="2" /><rect x="11.500" y="10" width="9.500" height="12" stroke={GOLD} strokeWidth="1.300" fill="#fff" /></ToolBtn>
      <ToolBtn><path d="M7 9.500H12C13 7 18 7 19 9.500H23.500V21.500H7Z" stroke={GOLD} strokeWidth="1.400" /><circle cx="15" cy="15.500" r="3" fill={INK} /></ToolBtn>
    </div>
  );
}

/* ---------- contour plot ---------- */

type RGB = [number, number, number];
const css = (c: RGB) => `rgb(${c.map((v) => Math.round(v)).join(",")})`;

/* Smooth polyline through control points (Catmull-Rom). */
function smooth(p: number[][], n = 6): number[][] {
  const out: number[][] = [];
  for (let i = 0; i < p.length - 1; i++) {
    const [a, b, c, d] = [p[Math.max(i - 1, 0)], p[i], p[i + 1], p[Math.min(i + 2, p.length - 1)]];
    for (let s = 0; s < n; s++) {
      const t = s / n;
      out.push([0, 1].map((k) => 0.5 * (2 * b[k] + (c[k] - a[k]) * t + (2 * a[k] - 5 * b[k] + 4 * c[k] - d[k]) * t * t + (3 * b[k] - a[k] - 3 * c[k] + d[k]) * t * t * t)));
    }
  }
  out.push(p[p.length - 1]);
  return out;
}

/* A stack of isolines, painted from the top one down; colour is blended between neighbours. */
function Bands({ lines, colors }: { lines: number[][][]; colors: RGB[] }) {
  const steps = 5;
  const curves = lines.map((l) => smooth(l));
  const last = curves.length - 1;
  const bottom = curves[last].map((p) => p.map((v) => v.toFixed(1)).join(" ")).reverse().join("L");
  const out: React.ReactNode[] = [];
  for (let k = 0; k < last; k++) {
    for (let s = 0; s < steps; s++) {
      const t = s / steps;
      const pts = curves[k].map((p, i) => p.map((v, j) => (v + (curves[k + 1][i][j] - v) * t).toFixed(1)).join(" ")).join("L");
      const c = colors[k].map((v, j) => v + (colors[k + 1][j] - v) * t) as RGB;
      out.push(<path key={`${k}-${s}`} d={`M${pts}L${bottom}Z`} fill={css(c)} />);
    }
  }
  return <>{out}</>;
}

const BLUE: RGB = [0, 40, 255];
const CYAN: RGB = [0, 235, 255];
const GREEN: RGB = [0, 240, 20];
const YELLOW: RGB = [255, 240, 0];
const ORANGE: RGB = [255, 130, 0];
const RED: RGB = [255, 15, 0];

function Jet({ a, b, reverse = false }: { a: number[][]; b: number[][]; reverse?: boolean }) {
  const f = reverse ? [0, 0.32, 0.44, 0.54, 0.64, 0.74, 1] : [0, 0.24, 0.36, 0.47, 0.58, 0.7, 1];
  const ramp = reverse ? [RED, RED, YELLOW, GREEN, CYAN, BLUE, BLUE] : [BLUE, BLUE, CYAN, GREEN, YELLOW, RED, RED];
  return <Bands lines={f.map((t) => a.map((p, i) => p.map((v, j) => v + (b[i][j] - v) * t)))} colors={ramp} />;
}

const PX = [50, 85, 125, 160, 220, 260, 300, 350, 400, 480, 550, 620, 700, 780, 850, 878];
const BODY = [
  [61, 63, 64, 60, 48, 50, 57, 50, 45, 45, 45, 45, 50, 45, 44, 46],
  [65, 68, 69, 65, 56, 58, 64, 60, 57, 58, 62, 63, 57, 48, 45, 46.400],
  [69, 72, 72, 70, 66, 72, 76, 77, 78, 83, 81, 74, 61, 50, 46, 46.800],
  [73, 76, 76, 76, 78, 86, 88, 87, 89, 92, 90, 80, 66, 52.500, 48, 47.200],
  [83, 83, 84, 86, 89, 93, 94, 92, 93, 97, 95, 84, 69, 55, 50, 48],
  [93, 94, 95, 98, 100, 101, 100, 97, 98, 101, 99, 88, 73, 58, 51, 49],
  [114, 107, 103, 104, 105, 105, 103, 101, 102, 104, 102, 92, 77, 61, 53, 50],
  [152, 142, 126, 118, 113, 110, 108, 105, 106, 107, 105, 95, 80, 64, 55, 51],
  [154, 160, 142, 136, 129, 124, 120, 116, 115, 115, 109, 98, 83, 68, 60, 52],
];
const BODY_COLORS: RGB[] = [[0, 10, 225], [0, 50, 255], [0, 125, 255], CYAN, GREEN, YELLOW, ORANGE, RED, RED];

const JET_TOP = [[953, 44], [1015, 44], [1075, 45], [1110, 56], [1160, 80], [1210, 108], [1255, 142], [1300, 182], [1350, 237], [1400, 300], [1450, 368], [1490, 425], [1519, 467]];
const JET_BOTTOM = [[958, 53], [1010, 57], [1060, 70], [1100, 88], [1145, 112], [1190, 136], [1232, 166], [1278, 203], [1320, 243], [1367, 298], [1415, 360], [1460, 425], [1490, 467]];
const LOW_TOP = [[1032, 297], [1033, 278], [1050, 260], [1085, 249], [1140, 250], [1190, 266], [1240, 297], [1300, 345], [1350, 398], [1414, 467]];
const LOW_BOTTOM = [[1046, 292], [1052, 290], [1065, 282], [1088, 277], [1132, 277], [1170, 292], [1215, 317], [1270, 358], [1315, 402], [1384, 467]];

const SPECKS = Array.from({ length: 132 }, (_, i) => {
  const a = (i * 7919) % 101;
  const b = (i * 104729) % 37;
  if (i % 3 === 0) return { x: 425 + (a % 46), y: 61 + (b % 26), w: 4 };
  if (i % 3 === 1) return { x: 330 + a * 1.9, y: 70 + (b % 12), w: 3 + (a % 4) };
  return { x: 545 + a * 1.25, y: 75 - a * 0.22 + (b % 10) - 4, w: 3 + (b % 6) };
});

function Contours() {
  return (
    <svg viewBox="0 0 1568 510" preserveAspectRatio="none" className="absolute top-[222px] left-[450px] h-[170px] w-[560px]" fill="none">
      <Bands lines={BODY.map((ys) => ys.map((y, i) => [PX[i], y]))} colors={BODY_COLORS} />
      <path d="M52 158L62 148L74 150L92 152L98 170L84 196L66 216L60 205Z" fill="#e4e7f0" />
      <path d="M52 158C60 154 66 160 66 172C66 186 70 192 76 192C84 184 74 172 72 160M60 170V206L66 214L90 188L106 160L124 143M80 152L88 172M88 150L96 164M96 148L102 160" stroke="#ee1c14" strokeWidth="3.200" />
      <path d="M52 117H60M66 127H92M56 133H88M60 141H98" stroke="#e8a06a" strokeWidth="2" strokeDasharray="6 5" />
      {SPECKS.map((s, i) => <rect key={i} x={s.x} y={s.y} width={s.w} height="2.500" fill={i % 2 ? "#e4ecfb" : "#a8c8fa"} />)}
      <path d="M610 50L640 58L665 48M625 66L660 60M615 56L632 50" stroke="#dfe6f4" strokeWidth="2.500" strokeDasharray="9 4" />
      <path d="M295 56V74M296 100V122" stroke="#e8ecf4" strokeWidth="2" />
      <path d="M848 44H875L880 48L866 57" fill="#e23b1c" /><path d="M848 45H862" stroke="#3fc23c" strokeWidth="4" />
      <Jet a={JET_TOP} b={JET_BOTTOM} />
      <path d="M949 44H962L968 52H956Z" fill="#f0401a" />
      <path d="M1338 252L1348 258L1358 256" stroke="#e6f0f0" strokeWidth="2.500" />
      <Jet a={LOW_TOP} b={LOW_BOTTOM} reverse />
      <path d="M1032 297L1033 280L1050 262L1054 270L1042 284L1038 294Z" fill="#f5200c" />
      <path d="M1121 270V279M1140 250V256" stroke="#e8ecf4" strokeWidth="2" />
    </svg>
  );
}

const TICKS = ["1.00e+00", "9.00e-01", "8.00e-01", "7.00e-01", "6.00e-01", "5.00e-01", "4.00e-01", "3.00e-01", "2.00e-01", "1.00e-01", "0.00e+00"];

function Legend() {
  return (
    <div className="absolute top-[177px] left-[17px] font-['Liberation_Sans'] text-[#111]">
      <div className="text-[9.200px] leading-[12px] tracking-[.420px]">contour-26</div>
      <div className="text-[9.200px] leading-[12px] tracking-[.420px] whitespace-nowrap">Volume fraction (water)</div>
      <div className="mt-[4px] ml-[12px] flex">
        <div className="mt-px h-[214px] w-[30px] border border-r-2 border-black bg-[linear-gradient(to_bottom,#f00_0%,#ff8000_17%,#ff0_30%,#0f0_50%,#0ff_71%,#0080ff_85%,#00f_100%)]" />
        <div className="-mt-[6px] flex h-[227px] flex-col justify-between">
          {TICKS.map((t, i) => (
            <div key={t} className="flex h-[14px] items-center gap-[11px] text-[10.800px]">
              <span className="h-px w-[2px] bg-black" />
              <span className={i === 0 || i === 10 ? "" : "tracking-[-0.050px]"}>{t}</span>
            </div>
          ))}
        </div>
      </div>
    </div>
  );
}

function GraphTab({ title, active = false, grey = false }: { title: string; active?: boolean; grey?: boolean }) {
  return (
    <div className={`flex h-full flex-1 items-center pr-[13px] pl-[5px] ${active ? "bg-[#cbd3e3]" : "bg-white"}`}>
      <FluentLogo className="-mt-[3px] size-5" grey={grey} />
      <span className={`flex-1 pt-px text-center text-[12.600px] font-bold text-[#1c2430] ${active ? "-ml-[8px] tracking-[.350px]" : "tracking-[.280px]"}`}>{title}</span>
      <Svg box="0 0 12 12" className="size-[11px]"><path d="M1 1L11 11M11 1L1 11" stroke="#111" strokeWidth="2.200" /></Svg>
    </div>
  );
}

function Viewport() {
  return (
    <div className="flex w-[1523px] shrink-0 flex-col">
      <div className="flex h-[27px] shrink-0">
        <GraphTab title="Mesh" />
        <GraphTab title="Scaled Residuals" grey />
        <GraphTab title="Contours of Volume fraction (water)" active />
      </div>
      <div className="relative h-[614px] bg-[linear-gradient(to_bottom,#cbd3e3_0%,#dde1eb_34%,#e8ebf4_60%,#f6f7f9_84%,#ffffff_100%)]">
        <div className="absolute top-[9px] right-[14px] w-[104px]">
          <Svg box="0 0 104 76" className="h-[76px] w-[104px]">
            <text x="0" y="28" fontFamily="Inter" fontWeight="800" fontSize="29.500" fill="#050505" textLength="103" lengthAdjust="spacingAndGlyphs">ANSYS</text>
            <text x="40" y="45" fontFamily="Inter" fontSize="17" fill="#111" textLength="38" lengthAdjust="spacingAndGlyphs">2021</text>
            <text x="84" y="45" fontFamily="Inter" fontWeight="800" fontSize="17" fill="#111" textLength="19" lengthAdjust="spacingAndGlyphs">R1</text>
            <path d="M2 54.500H103" stroke="#8f96a3" strokeWidth="1.300" />
            <text x="1" y="73" fontFamily="Inter" fontSize="14.500" fontWeight="500" fill="#222" textLength="105">ACADEMIC</text>
          </Svg>
        </div>
        <Legend />
        <Contours />
      </div>
    </div>
  );
}

/* ---------- console ---------- */

function Console() {
  return (
    <section className="ml-[3px] flex h-[131px] shrink-0 flex-col bg-[#bfc4cc]">
      <div className="flex h-[27px] items-center pr-[5px] pl-[9px]">
        <h2 className="pt-px text-[12.600px] font-bold tracking-[.150px] text-[#5f7089]">Console</h2>
        <Svg box="0 0 12 12" className="ml-auto size-[11px]"><rect x=".6" y=".6" width="10.800" height="10.800" rx="2" stroke="#444" /><rect x="2.500" y="4.500" width="4.500" height="4.500" stroke="#444" /><path d="M5 4V2.500H9.500V7H7.500" stroke="#444" /></Svg>
        <Svg box="0 0 6 10" className="-mt-px ml-[6px] h-[8px] w-[5px]"><path d="M5.500 1L1 5L5.500 9" stroke="#222" strokeWidth="1.700" /></Svg>
      </div>
      <div className="ml-px flex h-[98px] rounded-l bg-[#f7f7f7]">
        <div className="mt-[3px] ml-[4px] flex-1 font-['Liberation_Mono'] text-[13.330px] leading-[16px] whitespace-pre text-[#111]">
          <div className="pl-[51px]">mp-1</div>
          <div className="pl-[51px]">mp-2</div>
          <div>Done.</div>
          <div className="mt-4">Calculation complete.</div>
        </div>
        <div className="-mt-px mr-px flex gap-[6px]">
          <div className="flex h-[26px] w-8 items-center justify-center rounded-[3px] border border-[#aaa] bg-[#fafafa]">
            <Svg><path d="M9 1L17.300 17H.7Z" stroke={GOLD} strokeWidth="1.200" /><path d="M9 6.500V12M9 13V14.500" stroke="#777" strokeWidth="1.800" /></Svg>
          </div>
          <div className="flex h-[26px] w-8 items-center justify-center rounded-[3px] border border-[#aaa] bg-[#fafafa]">
            <Svg><circle cx="9" cy="9" r="8.400" stroke="#222" /><path d="M9 4.500V11M9 12.500V14.500" stroke="#ddb257" strokeWidth="1.800" /></Svg>
          </div>
        </div>
        <div className="flex w-4 flex-col bg-[#c0c9d1]">
          <Arrow dir="up" className="h-5 w-full" />
          <div className="mt-[23px] h-5 bg-[#5b6172]" />
          <Arrow dir="down" className="h-5 w-full" />
          <div className="flex flex-1 items-center justify-center border-l-2 border-[#bfc4cc] bg-white"><Svg box="0 0 12 12" className="h-[11px] w-[10px]"><path d="M1 7L5 11L11 1" stroke="#111" strokeWidth="2.600" /></Svg></div>
        </div>
      </div>
    </section>
  );
}

function SelectionRow() {
  return (
    <div className="flex flex-1 items-center pr-[4px] pl-[9px]">
      <div className="-mt-[2px] grid grid-cols-2 gap-[2px]">{Array.from({ length: 12 }, (_, i) => <span key={i} className="size-px bg-[#a3a3a3]" />)}</div>
      <span className="ml-auto pt-px text-[12.200px] text-[#111]">0 selected</span>
      <div className="ml-[3px] flex h-[23px] w-[167px] items-center justify-between rounded-[4px] border border-[#b5c0cc] bg-[#fcfcfd] pr-[8px] pl-[5px] text-[13px] text-[#111]">
        <span className="pt-px">all</span><Down className="-mt-[2px]" />
      </div>
    </div>
  );
}

/* ---------- Windows taskbar ---------- */

function Taskbar() {
  return (
    <footer className="flex h-[50px] items-center bg-[linear-gradient(to_right,#2b2b2b_0%,#343333_28%,#3c3635_42%,#463636_55%,#4a3737_72%,#3a3534_86%,#2b2b2d_100%)] font-['Open_Sans'] text-white">
      <div className="flex w-[60px] justify-center"><Svg box="0 0 20 20" className="size-5"><path d="M0 3L8.500 1.800V9.500H0ZM9.500 1.600L20 0V9.500H9.500ZM0 10.500H8.500V18.200L0 17ZM9.500 10.500H20V20L9.500 18.400Z" fill="#fff" /></Svg></div>
      <div className="flex h-[50px] w-[430px] items-center border border-[#5a5a5a] bg-[#333] pl-[14px]">
        <Svg box="0 0 21 21" className="size-[21px]"><circle cx="13.500" cy="7.500" r="6.300" stroke="#f0f0f0" strokeWidth="1.300" /><path d="M9 12L.5 20.500" stroke="#f0f0f0" strokeWidth="1.500" /></Svg>
        <span className="ml-[14px] text-[17.500px] tracking-[-0.100px] text-[#d6d6d6]">Type here to search</span>
      </div>
      <div className="flex w-[60px] justify-center"><Svg box="0 0 20 20" className="size-5"><circle cx="10" cy="10" r="8.200" stroke="#fff" strokeWidth="2.400" /></Svg></div>
      <div className="flex w-[60px] justify-center"><Svg box="0 0 20 20" className="size-5"><path d="M.5 0V4H13V0M.5 20V16H13V20M1 6H12.500V14H1ZM18 0V4M18 12V20" stroke="#fff" strokeWidth="1.300" /><rect x="16.500" y="6" width="3" height="3.500" fill="#fff" /></Svg></div>
      <div className="flex w-[68px] justify-center"><Svg box="0 0 26 26" className="size-[26px]"><rect width="26" height="26" rx="1" fill="#ffd500" /><path d="M13 13.500H26V24L24 26H13Z" fill="#3d3d3d" /><path d="M13 26L26 13.500V26Z" fill="#f5b212" /></Svg></div>
      <div className="flex w-[56px] justify-center"><Svg box="0 0 28 24" className="h-6 w-[28px]"><path d="M0 1.500H11L13 4H27V10H0Z" fill="#e0a00e" /><path d="M0 5H12L14 3H28V22H0Z" fill="#ffd764" /><path d="M5 24V14Q5 12.500 6.500 12.500H21.500Q23 12.500 23 14V24H18V18H10V24Z" fill="#3d9be0" /></Svg></div>
      <div className="flex w-[68px] justify-center">
        <Svg box="0 0 28 28" className="size-[28px]">
          <circle cx="14" cy="14" r="14" fill="#ffd04a" /><path d="M14 14L1.900 7A14 14 0 0 0 13 28L19.500 17Z" fill="#1c9e5a" /><path d="M1.900 7A14 14 0 0 1 26.100 7.500H14L8 12.500L7.500 15.500Z" fill="#dd4b3e" />
          <circle cx="14" cy="14" r="6.300" fill="#fff" /><circle cx="14" cy="14" r="5" fill="#4a87f5" />
        </Svg>
      </div>
      <div className="ml-[3px] flex h-full w-[51px] flex-col items-center border-b-3 border-[#a9a6a3] pt-[10px] pr-[2px]">
        <Svg box="0 0 30 30" className="size-[30px]">
          <rect width="30" height="30" fill="#9d9d9d" /><path d="M0 0H11L2 30H0Z" fill="#b9b9b9" /><path d="M20 0H30V30Z" fill="#d0d0d0" /><path d="M14 8L20 30H9Z" fill="#7b7b7b" />
          <text x="3" y="20" fontSize="14" fontWeight="700" fontFamily="Open Sans" fill="#fff" textLength="24" lengthAdjust="spacingAndGlyphs">WB</text>
        </Svg>
      </div>
      <div className="ml-[6px] flex h-full w-[61px] flex-col items-center border-b-3 border-[#b8b3b1] bg-[#676060] pt-[10px] pr-px"><FluentLogo className="size-[30px]" /></div>

      <div className="ml-auto flex h-full items-center">
        <Svg box="0 0 28 28" className="mt-[4px] size-[28px]"><circle cx="14" cy="14" r="13" fill="#0e95dc" stroke="#fff" strokeWidth="2.200" /><text x="14" y="21.500" textAnchor="middle" fontSize="21" fontWeight="700" fontFamily="Open Sans" fill="#fff">?</text></Svg>
        <Svg box="0 0 16 10" className="ml-[17px] h-[10px] w-4"><path d="M.7 9L8 1.500L15.300 9" stroke="#fff" strokeWidth="1.300" /></Svg>
        <Svg box="0 0 16 16" className="ml-[25px] size-4"><g stroke="#e8e8e8" strokeWidth="1.200"><path d="M.7 15.500A15 15 0 0 1 15.500 .7M4.500 15.500A11 11 0 0 1 15.500 4.800M8 15.500A7.500 7.500 0 0 1 15.500 8.500M11.500 15.500A4 4 0 0 1 15.500 12" /></g><circle cx="14" cy="14.500" r="1.500" fill="#fff" /></Svg>
        <Svg box="0 0 19 15" className="ml-[21px] h-[15px] w-[19px]"><path d="M.7 5H3.500L7 1V14L3.500 10H.7ZM11 4.500L17.500 11M17.500 4.500L11 11" stroke="#fff" strokeWidth="1.200" /></Svg>
        <Svg box="0 0 20 20" className="ml-[26px] size-5"><path d="M7 17L5 18.500L5.500 15L14 2C15 .5 17.500 2 16.500 4L8 16ZM12 9L19 8L14 14M6 12C2 11 0 14 1 16C2 19 6 18 8 15" stroke="#fff" strokeWidth="1.200" /></Svg>
        <span className="ml-[23px] w-[30px] text-[14.500px] tracking-[-0.200px]">ENG</span>
        <div className="ml-[12px] flex w-[80px] flex-col items-center text-[14.500px] leading-[23px] tracking-[-0.050px]"><span className="tracking-[-0.350px]">15:31</span><span className="whitespace-nowrap">09-05-2021</span></div>
        <Svg box="0 0 20 20" className="ml-[22px] size-5"><path d="M.7 .7H19.300V16H12.500L10 18.800L7.500 16H.7Z" stroke="#fff" strokeWidth="1.200" /></Svg>
        <div className="mr-[5px] ml-[25px] h-full w-px bg-[#6e6e6e]" />
      </div>
    </footer>
  );
}

export default function App() {
  return (
    <div className="flex h-[1080px] w-[1920px] flex-col overflow-hidden bg-white font-['Noto_Sans',sans-serif] text-[13px]">
      <TitleBar />
      <QuickBar />
      <MenuBar />
      <Ribbon />
      <div className="flex h-[812px] shrink-0">
        <div className="w-[30px] shrink-0 bg-[#34495f]" />
        <main className="flex w-[1890px] pt-[3px]">
          <Outline />
          <div className="flex w-[1624px] flex-col">
            <div className="flex h-[641px] shrink-0">
              <LeftTools />
              <Viewport />
              <RightTools />
            </div>
            <SelectionRow />
            <Console />
          </div>
        </main>
      </div>
      <Taskbar />
    </div>
  );
}
